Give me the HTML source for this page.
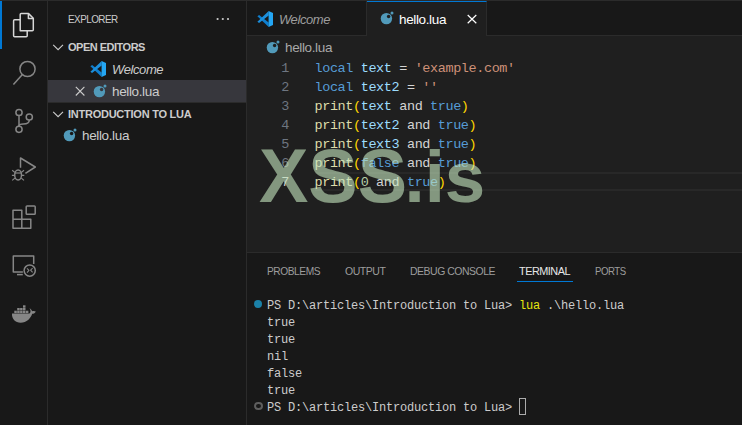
<!DOCTYPE html>
<html lang="en">
<head>
<meta charset="utf-8">
<title>hello.lua - Introduction to Lua - Visual Studio Code</title>
<style>
*{margin:0;padding:0;box-sizing:border-box}
html,body{width:742px;height:425px;overflow:hidden;background:#181818}
body{position:relative;font-family:"Liberation Sans",sans-serif;color:#ccc;font-size:13px}
.abs{position:absolute}
.t{position:absolute;white-space:pre;line-height:20px;height:20px}
#topline{left:0;top:0;width:742px;height:1px;background:#2b2b2b}
#activity{left:0;top:1px;width:48px;height:424px;background:#181818;border-right:1px solid #2b2b2b}
#indicator{left:0;top:1px;width:2px;height:48px;background:#0078d4}
.ai{position:absolute;left:0;width:48px;height:48px}
#sidebar{left:48px;top:1px;width:199px;height:424px;background:#181818;border-right:1px solid #2b2b2b}
#editor{left:247px;top:1px;width:495px;height:251px;background:#1f1f1f}
#tabbar{left:247px;top:1px;width:495px;height:35px;background:#181818;border-bottom:1px solid #2b2b2b}
#tab1{left:247px;top:1px;width:120px;height:35px;background:#181818;border-right:1px solid #2b2b2b;border-bottom:1px solid #2b2b2b}
#tab2{left:367px;top:1px;width:120px;height:35px;background:#1f1f1f;border-right:1px solid #2b2b2b;border-top:1px solid #0078d4}
#panel{left:247px;top:252px;width:495px;height:173px;background:#181818;border-top:1px solid #2b2b2b}
.ui{font-size:13px;letter-spacing:-0.55px}
.ui2{font-size:13.5px;letter-spacing:-0.36px}
.hd{font-size:11px;letter-spacing:-0.9px}
.hb{font-size:11px;font-weight:bold;letter-spacing:-0.75px;color:#ccc}
.code{position:absolute;left:314.5px;white-space:pre;font-family:"Liberation Mono",monospace;font-size:13.5px;letter-spacing:-0.401px;line-height:19px;height:19px;padding-top:2px;box-sizing:content-box;color:#d4d4d4}
.ln{position:absolute;left:262px;width:27px;text-align:right;white-space:pre;font-family:"Liberation Mono",monospace;font-size:13.5px;letter-spacing:-0.401px;line-height:19px;height:19px;padding-top:2px;box-sizing:content-box;color:#6e7681}
.k{color:#569cd6}.v{color:#9cdcfe}.s{color:#ce9178}.f{color:#dcdcaa}.p{color:#ffd700}.n{color:#b5cea8}
.term{position:absolute;left:267px;white-space:pre;font-family:"Liberation Mono",monospace;font-size:12px;letter-spacing:-0.201px;line-height:17px;height:17px;padding-top:2px;box-sizing:content-box;color:#ccc}
.y{color:#e5e510}
#wm{left:259px;top:137px;font-family:"Liberation Sans",sans-serif;font-weight:bold;font-size:72.7px;line-height:80px;height:80px;color:rgba(198,232,191,0.6);white-space:pre;letter-spacing:0}
#wm span{display:inline-block;transform:scale(1.018,1.057);transform-origin:0 65.5px}
</style>
</head>
<body>
<div class="abs" id="topline"></div>
<div class="abs" id="activity"></div>
<div class="abs" id="indicator"></div>

<!-- activity bar icons -->
<svg class="ai" style="top:1px" viewBox="0 0 48 48" fill="none" stroke="#d7d7d7" stroke-width="1.5" stroke-linejoin="round">
  <path d="M20.200 29.800V13.600a1 1 0 0 1 1-1h7.400l4.700 4.700v11.500a1 1 0 0 1-1 1z"/>
  <path d="M28.400 12.800v4.700h4.700"/>
  <path d="M20 18.700h-5.400a1 1 0 0 0-1 1v15a1 1 0 0 0 1 1h11.600a1 1 0 0 0 1-1v-5"/>
</svg>
<svg class="ai" style="top:49px" viewBox="0 0 48 48" fill="none" stroke="#868686" stroke-width="1.5" stroke-linecap="butt">
  <circle cx="27.5" cy="20" r="7.6"/>
  <path d="M22.4 25.6L13.4 35.6"/>
</svg>
<svg class="ai" style="top:97px" viewBox="0 0 48 48" fill="none" stroke="#868686" stroke-width="1.5">
  <circle cx="19" cy="15.5" r="3.1"/>
  <circle cx="19" cy="32.3" r="3.1"/>
  <circle cx="29.3" cy="20" r="3.1"/>
  <path d="M19 18.6v10.6"/>
  <path d="M29.3 23.1c0 3.4-3.2 4-6 4-2.4 0-4.3 0.6-4.3 2.2"/>
</svg>
<svg class="ai" style="top:145px" viewBox="0 0 48 48" fill="none" stroke="#868686" stroke-width="1.500" stroke-linejoin="round">
  <path d="M20.500 22.800V13L35.300 22L25.400 28.400"/>
  <ellipse cx="18.1" cy="30" rx="3.4" ry="5.1"/>
  <path d="M14.7 28h6.8" stroke-width="1.2"/>
  <path d="M12.2 25.2l2.6 2.2M24 25.2l-2.6 2.2M11.9 30.4h2.8M24.3 30.4h-2.8M12.2 35.4l2.7-2.3M24 35.4l-2.7-2.3" stroke-width="1.2"/>
</svg>
<svg class="ai" style="top:193px" viewBox="0 0 48 48" fill="none" stroke="#868686" stroke-width="1.5" stroke-linejoin="round">
  <path d="M13 17.200h8.800v9.100h9v8.900H13z"/>
  <path d="M13 26.300h8.800v8.900"/>
  <rect x="26.200" y="12.900" width="9" height="8.400" rx="0.800"/>
</svg>
<svg class="ai" style="top:241px" viewBox="0 0 48 48" fill="none" stroke="#868686" stroke-width="1.5" stroke-linejoin="round">
  <path d="M33.7 23V15.1H13.3v16h9.6"/>
  <path d="M17 33.6h5.8"/>
  <circle cx="29.7" cy="29.6" r="5.6"/>
  <path d="M27 27.4l2 2-2 2.2M32.6 27.2l-2 2 2 2.2" stroke-width="1.1"/>
</svg>
<svg class="ai" style="top:289px" viewBox="0 0 48 48" fill="#868686" stroke="none">
  <path d="M12 24.6h17.4c0.9-0.6 1.2-1.6 1.1-2.8-0.1-1-0.5-1.8-1-2.6 1.2 0.6 2.2 1.6 2.6 3 1.300-0.500 2.600-0.400 3.700 0.300-0.700 1.400-1.900 2.300-3.600 2.300-1.500 4.500-5.400 9.000-11.600 9.000C15.500 33.800 11.600 30 12 24.600z"/>
  <g>
    <rect x="14.300" y="21.700" width="2.500" height="2.400"/><rect x="17.200" y="21.700" width="2.500" height="2.400"/><rect x="20.100" y="21.700" width="2.500" height="2.400"/><rect x="23.000" y="21.700" width="2.500" height="2.400"/><rect x="25.900" y="21.700" width="2.500" height="2.400"/>
    <rect x="17.200" y="19.000" width="2.500" height="2.400"/><rect x="20.100" y="19.000" width="2.500" height="2.400"/><rect x="23.000" y="19.000" width="2.500" height="2.400"/>
    <rect x="23.000" y="16.300" width="2.500" height="2.400"/>
  </g>
</svg>

<div class="abs" id="sidebar"></div>
<div class="t hd" style="left:68px;top:9px;color:#ccc;letter-spacing:-0.6px;transform:scaleX(0.9);transform-origin:0 50%">EXPLORER</div>
<svg class="abs" style="left:214px;top:11px" width="18" height="16" viewBox="0 0 18 16" fill="#ccc"><circle cx="3.600" cy="8" r="1.100"/><circle cx="8.800" cy="8" r="1.100"/><circle cx="14.000" cy="8" r="1.100"/></svg>

<!-- OPEN EDITORS -->
<svg class="abs" style="left:50px;top:39px" width="16" height="16" viewBox="0 0 16 16" fill="none" stroke="#ccc" stroke-width="1.100"><path d="M3.200 5.800l4.900 4.900 4.900-4.900"/></svg>
<div class="t hb" style="left:68px;top:37px;letter-spacing:-0.5px">OPEN EDITORS</div>

<svg class="abs" style="left:90px;top:61px" width="16" height="16" viewBox="0 0 16 16">
  <path d="M11.700 15.900V11.400L2.100 3.900 0.400 5.300z" fill="#0f7fcf"/>
  <path d="M11.700 0.100V4.600L2.100 12.100 0.400 10.700z" fill="#1c8fdc"/>
  <path d="M11.600 0.100L16 1.900V14.100L11.600 15.900z" fill="#24a6f3"/>
</svg>
<div class="t ui" style="left:112px;top:60px;font-style:italic;letter-spacing:-0.4px">Welcome</div>

<div class="abs" style="left:48px;top:80px;width:198px;height:22px;background:#37373d"></div>
<svg class="abs" style="left:72px;top:83px" width="16" height="16" viewBox="0 0 16 16" fill="none" stroke="#ccc" stroke-width="1.100"><path d="M3.800 3.900l8.600 8.600M12.400 3.900l-8.600 8.600"/></svg>
<svg class="abs" style="left:92px;top:83px" width="16" height="16" viewBox="0 0 16 16" fill="#519aba"><circle cx="7.400" cy="8.600" r="5.700"/><circle cx="13" cy="2.900" r="1.500"/><circle cx="9.600" cy="6.500" r="1.700" fill="#37373d"/></svg>
<div class="t ui2" style="left:112px;top:82px">hello.lua</div>

<div class="abs" style="left:48px;top:102px;width:198px;height:1px;background:#2b2b2b"></div>
<svg class="abs" style="left:50px;top:106px" width="16" height="16" viewBox="0 0 16 16" fill="none" stroke="#ccc" stroke-width="1.100"><path d="M3.200 5.800l4.900 4.900 4.900-4.900"/></svg>
<div class="t hb" style="left:68px;top:104px;letter-spacing:-0.25px">INTRODUCTION TO LUA</div>
<svg class="abs" style="left:62px;top:127px" width="16" height="16" viewBox="0 0 16 16" fill="#519aba"><circle cx="7.400" cy="8.600" r="5.700"/><circle cx="13" cy="2.900" r="1.500"/><circle cx="9.600" cy="6.500" r="1.700" fill="#181818"/></svg>
<div class="t ui2" style="left:82px;top:126px">hello.lua</div>

<!-- editor -->
<div class="abs" id="editor"></div>
<div class="abs" id="tabbar"></div>
<div class="abs" id="tab1"></div>
<div class="abs" id="tab2"></div>
<svg class="abs" style="left:257px;top:11px" width="16" height="16" viewBox="0 0 16 16">
  <path d="M11.700 15.900V11.400L2.100 3.900 0.400 5.300z" fill="#0f7fcf"/>
  <path d="M11.700 0.100V4.600L2.100 12.100 0.400 10.700z" fill="#1c8fdc"/>
  <path d="M11.600 0.100L16 1.900V14.100L11.600 15.900z" fill="#24a6f3"/>
</svg>
<div class="t ui" style="left:279px;top:10px;font-style:italic;color:#9d9d9d;letter-spacing:-0.42px">Welcome</div>
<svg class="abs" style="left:379px;top:10px" width="16" height="16" viewBox="0 0 16 16" fill="#519aba"><circle cx="7.400" cy="8.600" r="5.700"/><circle cx="13" cy="2.900" r="1.500"/><circle cx="9.600" cy="6.500" r="1.700" fill="#1f1f1f"/></svg>
<div class="t ui2" style="left:399px;top:10px;color:#fff">hello.lua</div>
<svg class="abs" style="left:464px;top:11px" width="16" height="16" viewBox="0 0 16 16" fill="none" stroke="#fff" stroke-width="1.200"><path d="M3.700 4l8.600 8.200M12.300 4l-8.600 8.200"/></svg>

<!-- breadcrumb -->
<svg class="abs" style="left:264.500px;top:39px" width="16" height="16" viewBox="0 0 16 16" fill="#519aba"><circle cx="7.400" cy="8.600" r="5.700"/><circle cx="13" cy="2.900" r="1.500"/><circle cx="9.600" cy="6.500" r="1.700" fill="#1f1f1f"/></svg>
<div class="t ui2" style="left:285px;top:38px;color:#a9a9a9">hello.lua</div>

<!-- code -->
<div class="abs" style="left:315px;top:172px;width:427px;height:19px;border-top:2px solid #282828;border-bottom:2px solid #282828"></div>
<div class="ln" style="top:57px">1</div>
<div class="ln" style="top:76px">2</div>
<div class="ln" style="top:95px">3</div>
<div class="ln" style="top:114px">4</div>
<div class="ln" style="top:133px">5</div>
<div class="ln" style="top:152px">6</div>
<div class="ln" style="top:171px;color:#ccc">7</div>
<div class="code" style="top:57px"><span class="k">local</span> <span class="v">text</span> = <span class="s">'example.com'</span></div>
<div class="code" style="top:76px"><span class="k">local</span> <span class="v">text2</span> = <span class="s">''</span></div>
<div class="code" style="top:95px"><span class="f">print</span><span class="p">(</span><span class="v">text</span> and <span class="k">true</span><span class="p">)</span></div>
<div class="code" style="top:114px"><span class="f">print</span><span class="p">(</span><span class="v">text2</span> and <span class="k">true</span><span class="p">)</span></div>
<div class="code" style="top:133px"><span class="f">print</span><span class="p">(</span><span class="v">text3</span> and <span class="k">true</span><span class="p">)</span></div>
<div class="code" style="top:152px"><span class="f">print</span><span class="p">(</span><span class="k">false</span> and <span class="k">true</span><span class="p">)</span></div>
<div class="code" style="top:171px"><span class="f">print</span><span class="p">(</span><span class="n">0</span> and <span class="k">true</span><span class="p">)</span></div>

<!-- watermark -->
<div class="abs" id="wm"><span>XSS</span>.is</div>

<!-- panel -->
<div class="abs" id="panel"></div>
<div class="t hd" style="left:267px;top:261px;color:#9d9d9d;letter-spacing:-0.5px;transform:scaleX(0.928);transform-origin:0 50%">PROBLEMS</div>
<div class="t hd" style="left:345px;top:261px;color:#9d9d9d;letter-spacing:-0.5px;transform:scaleX(0.955);transform-origin:0 50%">OUTPUT</div>
<div class="t hd" style="left:410px;top:261px;color:#9d9d9d;letter-spacing:-0.5px;transform:scaleX(0.95);transform-origin:0 50%">DEBUG CONSOLE</div>
<div class="t hd" style="left:519px;top:261px;color:#e7e7e7;letter-spacing:-0.5px;transform:scaleX(0.988);transform-origin:0 50%">TERMINAL</div>
<div class="abs" style="left:517px;top:281px;width:56px;height:1px;background:#0078d4"></div>
<div class="t hd" style="left:595px;top:261px;color:#9d9d9d;letter-spacing:-0.5px;transform:scaleX(0.875);transform-origin:0 50%">PORTS</div>

<div class="abs" style="left:254px;top:300px;width:8px;height:8px;border-radius:50%;background:#1b81a8"></div>
<div class="term" style="top:296px">PS D:\articles\Introduction to Lua&gt; <span class="y">lua</span> .\hello.lua</div>
<div class="term" style="top:313px">true</div>
<div class="term" style="top:330px">true</div>
<div class="term" style="top:347px">nil</div>
<div class="term" style="top:364px">false</div>
<div class="term" style="top:381px">true</div>
<div class="term" style="top:398px">PS D:\articles\Introduction to Lua&gt; </div>
<div class="abs" style="left:253.500px;top:401.600px;width:9px;height:8.600px;border-radius:50%;border:2px solid #5e5e5e"></div>
<div class="abs" style="left:519px;top:398px;width:7px;height:16.500px;border:1px solid #ababab"></div>
</body>
</html>
